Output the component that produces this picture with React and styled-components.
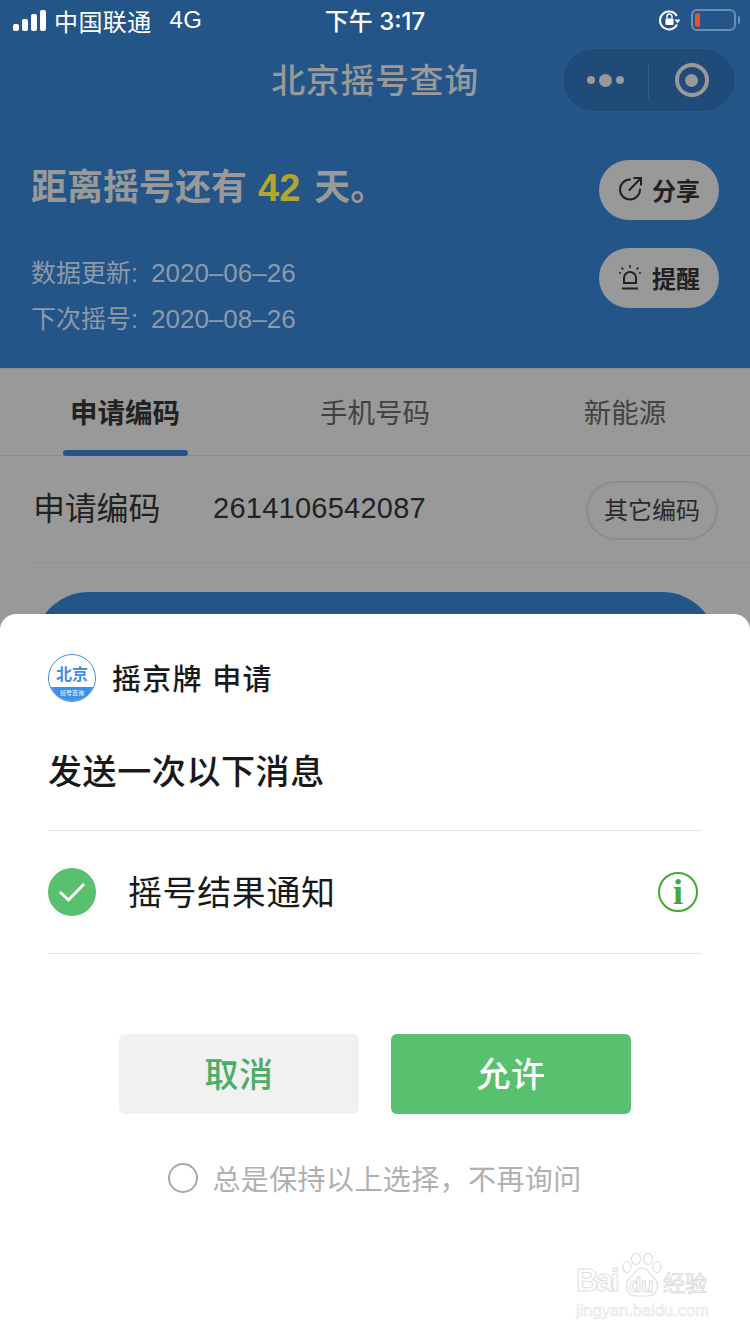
import React from "react";
import styled, { createGlobalStyle } from "styled-components";

const Global = createGlobalStyle`
  html, body { margin: 0; padding: 0; background: #fff; }
  body { font-family: "Liberation Sans", "Noto Sans CJK SC", sans-serif; }
  * { box-sizing: border-box; }
`;

const Page = styled.div`
  position: relative;
  width: 750px;
  height: 1334px;
  overflow: hidden;
  background: #999999;
`;

const Header = styled.header`
  height: 369px;
  background: #235588;
  border-bottom: 1px solid #8f8f8f;
`;

const StatusBar = styled.div`
  height: 40px;
  padding: 0 13px;
  display: grid;
  grid-template-columns: 1fr auto 1fr;
  align-items: center;
  color: #fff;
`;

const StatusLeft = styled.div`
  display: flex;
  align-items: center;
  font-size: 24px;
  letter-spacing: 0.4px;
`;

const Signal = styled.div`
  display: flex;
  align-items: flex-end;
  gap: 3px;
  height: 21px;
  margin-right: 8px;
`;

const SignalBar = styled.span`
  width: 6px;
  height: ${p => p.$h}px;
  background: #fff;
  border-radius: 2px;
`;

const Network = styled.span`
  margin-left: 18px;
`;

const Clock = styled.div`
  font-family: "Inter", "Noto Sans CJK SC", sans-serif;
  font-size: 24px;
  font-weight: 500;
  padding-bottom: 2px;
`;

const StatusRight = styled.div`
  display: flex;
  justify-content: flex-end;
  align-items: center;
  gap: 10px;
`;

const Battery = styled.div`
  position: relative;
  width: 45px;
  height: 22px;
  margin-right: 1px;
  border: 2px solid #6a90b6;
  border-radius: 6px;
  padding: 2px;
  &::after {
    content: "";
    position: absolute;
    right: -6px;
    top: 5px;
    width: 2px;
    height: 8px;
    background: #6a90b6;
    border-radius: 0 2px 2px 0;
  }
`;

const BatteryLevel = styled.div`
  width: 5px;
  height: 100%;
  background: #ee4b36;
  border-radius: 2px;
`;

const NavBar = styled.div`
  position: relative;
  height: 80px;
  display: flex;
  justify-content: center;
  align-items: center;
  padding-bottom: 4px;
`;

const NavTitle = styled.h1`
  margin: 0;
  font-size: 34px;
  font-weight: 500;
  color: #999999;
  letter-spacing: 0.6px;
`;

const Capsule = styled.div`
  position: absolute;
  right: 14px;
  top: 8px;
  width: 174px;
  height: 64px;
  display: flex;
  align-items: center;
  background: #204b78;
  border: 1px solid #2d5a88;
  border-radius: 32px;
`;

const CapsuleHalf = styled.div`
  flex: 1 1 0;
  height: 100%;
  display: flex;
  align-items: center;
  justify-content: center;
  gap: 4px;
  padding: ${p => p.$pad || "0"};
`;

const Dot = styled.span`
  width: ${p => p.$s}px;
  height: ${p => p.$s}px;
  background: #999;
  border-radius: 50%;
`;

const CapsuleLine = styled.span`
  flex: 0 0 1px;
  height: 37px;
  background: #2f5b88;
`;

const Ring = styled.span`
  width: 34px;
  height: 34px;
  border: 4px solid #999;
  border-radius: 50%;
  display: flex;
  align-items: center;
  justify-content: center;
  &::after {
    content: "";
    width: 13px;
    height: 13px;
    border-radius: 50%;
    background: #999;
  }
`;

const Hero = styled.div`
  display: flex;
  justify-content: space-between;
  padding: 40px 31px 0 31px;
`;

const HeroText = styled.div`
  display: flex;
  flex-direction: column;
`;

const Countdown = styled.div`
  font-size: 36px;
  font-weight: 700;
  color: #999999;
  line-height: 54px;
  margin-top: 1px;
  display: flex;
  align-items: center;
`;

const Days = styled.span`
  color: #b2a532;
  font-weight: 700;
  font-size: 38px;
  margin: 0 14px 0 11px;
`;

const DateLines = styled.div`
  margin-top: 35px;
  font-size: 26px;
  line-height: 46px;
  color: #8e9aa8;
`;

const DateLabel = styled.span`
  display: inline-block;
  width: 120px;
  font-size: 25px;
  white-space: nowrap;
`;

const HeroActions = styled.div`
  display: flex;
  flex-direction: column;
  gap: 28px;
`;

const ActionButton = styled.div`
  width: 120px;
  height: 60px;
  padding: 0 0 2px 18px;
  border-radius: 30px;
  background: #999999;
  color: #212121;
  display: flex;
  align-items: center;
  gap: 9px;
  font-size: 24px;
  font-weight: 700;
  svg { flex: 0 0 26px; }
`;

const Tabs = styled.div`
  height: 87px;
  display: grid;
  grid-template-columns: repeat(3, 1fr);
  border-bottom: 1px solid #8c8c8c;
`;

const Tab = styled.div`
  position: relative;
  display: flex;
  align-items: center;
  justify-content: center;
  font-size: 27.5px;
  padding-bottom: 2px;
  font-weight: ${p => (p.$active ? 700 : 400)};
  color: ${p => (p.$active ? "#222" : "#424242")};
  ${p => p.$active && `
    &::after {
      content: "";
      position: absolute;
      left: 63px;
      bottom: -1px;
      width: 125px;
      height: 6px;
      border-radius: 3px;
      background: #235588;
    }
  `}
`;

const CodeRow = styled.div`
  height: 107px;
  margin-left: 32px;
  display: flex;
  align-items: center;
  padding-right: 32px;
  border-bottom: 1px solid #919191;
`;

const CodeLabel = styled.span`
  width: 181px;
  padding: 0 0 7px 1px;
  font-size: 32px;
  color: #222;
  letter-spacing: -0.2px;
`;

const CodeValue = styled.span`
  flex: 1;
  padding-bottom: 1px;
  font-size: 29px;
  color: #222;
  letter-spacing: 0.25px;
`;

const OtherCode = styled.span`
  width: 132px;
  height: 59px;
  margin-top: 2px;
  padding-bottom: 3px;
  border: 2px solid #8c8c8c;
  border-radius: 30px;
  display: flex;
  align-items: center;
  justify-content: center;
  font-size: 24px;
  color: #2a2a2a;
`;

const BigButton = styled.div`
  margin: 29px 33px 0 34px;
  height: 110px;
  border-radius: 55px;
  background: #235588;
`;

const Sheet = styled.section`
  position: absolute;
  left: 0;
  right: 0;
  top: 614px;
  bottom: 0;
  background: #fff;
  border-radius: 16px 16px 0 0;
  padding: 40px 48px 0;
`;

const AppRow = styled.div`
  display: flex;
  align-items: center;
  gap: 16px;
  height: 48px;
`;

const AppName = styled.span`
  font-size: 29px;
  font-weight: 500;
  color: #191919;
  letter-spacing: 1.3px;
  padding-bottom: 2px;
`;

const Logo = styled.div`
  position: relative;
  width: 48px;
  height: 48px;
  border-radius: 50%;
  border: 1px solid #3f8fe6;
  overflow: hidden;
  display: flex;
  justify-content: center;
  background: #fff;
`;

const LogoTitle = styled.span`
  font-size: 16px;
  font-weight: 700;
  color: #3f8fe6;
  line-height: 16px;
  margin-top: 12px;
`;

const LogoBand = styled.span`
  position: absolute;
  left: 0;
  right: 0;
  bottom: 0;
  height: 14px;
  background: #3f8fe6;
  color: #fff;
  font-size: 6px;
  line-height: 12px;
  text-align: center;
`;

const SheetTitle = styled.h2`
  margin: 0;
  height: 129px;
  padding-top: 47px;
  font-size: 34px;
  line-height: 46px;
  font-weight: 500;
  color: #191919;
  letter-spacing: 0.6px;
  border-bottom: 1px solid #e4e4e4;
`;

const OptionRow = styled.div`
  height: 123px;
  display: flex;
  align-items: center;
  border-bottom: 1px solid #e4e4e4;
`;

const Check = styled.span`
  width: 48px;
  height: 48px;
  border-radius: 50%;
  background: #58c06f;
  display: flex;
  align-items: center;
  justify-content: center;
`;

const OptionText = styled.span`
  flex: 1;
  margin-left: 32px;
  padding-bottom: 4px;
  font-size: 34px;
  color: #191919;
  letter-spacing: 0.6px;
`;

const InfoMark = styled.span`
  width: 40px;
  height: 40px;
  margin-right: 4px;
  border: 2px solid #46a832;
  border-radius: 50%;
  color: #46a832;
  display: flex;
  align-items: center;
  justify-content: center;
  font-family: "Liberation Serif", serif;
  font-weight: 700;
  font-size: 36px;
  line-height: 1;
`;

const Buttons = styled.div`
  display: flex;
  justify-content: center;
  gap: 32px;
  margin-top: 80px;
`;

const SheetButton = styled.div`
  width: 240px;
  height: 80px;
  padding-bottom: 4px;
  border-radius: 6px;
  display: flex;
  align-items: center;
  justify-content: center;
  font-size: 34px;
  font-weight: 500;
  letter-spacing: 0.5px;
  background: ${p => (p.$primary ? "#58c06f" : "#f1f1f1")};
  color: ${p => (p.$primary ? "#fff" : "#4cae66")};
`;

const Remember = styled.div`
  margin-top: 44px;
  display: flex;
  justify-content: center;
  align-items: center;
  gap: 14px;
  font-size: 28px;
  color: #b0b0b0;
  letter-spacing: 0.4px;
`;

const Radio = styled.span`
  width: 30px;
  height: 30px;
  border: 2px solid #a8a8a8;
  border-radius: 50%;
`;

const Watermark = styled.div`
  position: absolute;
  right: 40px;
  bottom: 14px;
  width: 134px;
  color: #fff;
  -webkit-text-stroke: 1px #dedede;
`;

const WatermarkTop = styled.div`
  position: relative;
  height: 44px;
  font-weight: 700;
  display: flex;
  align-items: flex-end;
  white-space: nowrap;
`;

const WatermarkBai = styled.span`
  width: 41px;
  font-size: 31px;
  line-height: 32px;
  letter-spacing: -2.5px;
`;

const WatermarkCn = styled.span`
  font-size: 22px;
  line-height: 26px;
  margin-left: 46px;
  font-weight: 400;
`;

const WatermarkPaw = styled.svg`
  position: absolute;
  left: 46px;
  top: 0;
`;

const WatermarkDu = styled.span`
  position: absolute;
  left: 53px;
  bottom: 1px;
  font-size: 20px;
  line-height: 22px;
`;

const WatermarkUrl = styled.div`
  font-size: 16.5px;
  line-height: 20px;
  margin-top: 3px;
  white-space: nowrap;
  -webkit-text-stroke: 0.6px #e2e2e2;
`;

const ShareIcon = () => (
  <svg width="26" height="26" viewBox="0 0 26 26" fill="none" stroke="#212121" strokeWidth="2">
    <path d="M13 3.500a10 10 0 1 0 10 10" strokeLinecap="round" />
    <path d="M12 14.500 23.500 2.500M16.500 2h7.500v7.500" />
  </svg>
);

const AlarmIcon = () => (
  <svg width="26" height="26" viewBox="-1 0 26 26" fill="none" stroke="#212121" strokeWidth="2">
    <path d="M6 19v-5a6 6 0 0 1 12 0v5zM4 24.500h16" />
    <path d="M12 1v3M3.500 3.500l2 2M20.500 3.500l-2 2M1 9h2M21 9h2" strokeWidth="1.500" />
  </svg>
);

const RotationLock = () => (
  <svg width="22" height="22" viewBox="0 0 22 22" fill="none">
    <path d="M17.800 7A9 9 0 1 0 18 15.500" stroke="#fff" strokeWidth="2" />
    <path d="M15.500 10.500h6l-3 4z" fill="#fff" />
    <rect x="6.500" y="9.500" width="8" height="6.500" rx="1" fill="#fff" />
    <path d="M8 9.500V7.500a2.500 2.500 0 0 1 5 0v2" stroke="#fff" strokeWidth="1.400" />
  </svg>
);

export default function App() {
  return (
    <Page>
      <Global />
      <Header>
        <StatusBar>
          <StatusLeft>
            <Signal>
              <SignalBar $h={7} />
              <SignalBar $h={12} />
              <SignalBar $h={17} />
              <SignalBar $h={21} />
            </Signal>
            中国联通
            <Network>4G</Network>
          </StatusLeft>
          <Clock>下午 3:17</Clock>
          <StatusRight>
            <RotationLock />
            <Battery>
              <BatteryLevel />
            </Battery>
          </StatusRight>
        </StatusBar>
        <NavBar>
          <NavTitle>北京摇号查询</NavTitle>
          <Capsule>
            <CapsuleHalf>
              <Dot $s={8} />
              <Dot $s={13} />
              <Dot $s={8} />
            </CapsuleHalf>
            <CapsuleLine />
            <CapsuleHalf $pad="0 1px 0 0">
              <Ring />
            </CapsuleHalf>
          </Capsule>
        </NavBar>
        <Hero>
          <HeroText>
            <Countdown>
              距离摇号还有<Days>42</Days>天。
            </Countdown>
            <DateLines>
              <div><DateLabel>数据更新:</DateLabel>2020–06–26</div>
              <div><DateLabel>下次摇号:</DateLabel>2020–08–26</div>
            </DateLines>
          </HeroText>
          <HeroActions>
            <ActionButton><ShareIcon />分享</ActionButton>
            <ActionButton><AlarmIcon />提醒</ActionButton>
          </HeroActions>
        </Hero>
      </Header>

      <Tabs>
        <Tab $active>申请编码</Tab>
        <Tab>手机号码</Tab>
        <Tab>新能源</Tab>
      </Tabs>
      <CodeRow>
        <CodeLabel>申请编码</CodeLabel>
        <CodeValue>2614106542087</CodeValue>
        <OtherCode>其它编码</OtherCode>
      </CodeRow>
      <BigButton />

      <Sheet>
        <AppRow>
          <Logo>
            <LogoTitle>北京</LogoTitle>
            <LogoBand>摇号查询</LogoBand>
          </Logo>
          <AppName>摇京牌 申请</AppName>
        </AppRow>
        <SheetTitle>发送一次以下消息</SheetTitle>
        <OptionRow>
          <Check>
            <svg width="28" height="22" viewBox="0 0 28 22" fill="none" stroke="#fff" strokeWidth="3">
              <path d="M2 11l8.500 8L26 3" />
            </svg>
          </Check>
          <OptionText>摇号结果通知</OptionText>
          <InfoMark>i</InfoMark>
        </OptionRow>
        <Buttons>
          <SheetButton>取消</SheetButton>
          <SheetButton $primary>允许</SheetButton>
        </Buttons>
        <Remember>
          <Radio />
          <span>总是保持以上选择{"\uFF0C"}不再询问</span>
        </Remember>
      </Sheet>

      <Watermark>
        <WatermarkTop>
          <WatermarkBai>Bai</WatermarkBai>
          <WatermarkPaw width="40" height="44" viewBox="0 0 40 44" fill="#fff" stroke="#dedede" strokeWidth="1.200">
            <ellipse cx="14" cy="6" rx="4.500" ry="5.500" />
            <ellipse cx="26" cy="6" rx="4.500" ry="5.500" />
            <ellipse cx="5" cy="14" rx="4" ry="5.500" />
            <ellipse cx="35" cy="14" rx="4" ry="5.500" />
            <path d="M20 15c-6 0-7 6-12 10-6 5-4 18 6 18h12c10 0 12-13 6-18-5-4-6-10-12-10z" />
          </WatermarkPaw>
          <WatermarkDu>du</WatermarkDu>
          <WatermarkCn>经验</WatermarkCn>
        </WatermarkTop>
        <WatermarkUrl>jingyan.baidu.com</WatermarkUrl>
      </Watermark>
    </Page>
  );
}
